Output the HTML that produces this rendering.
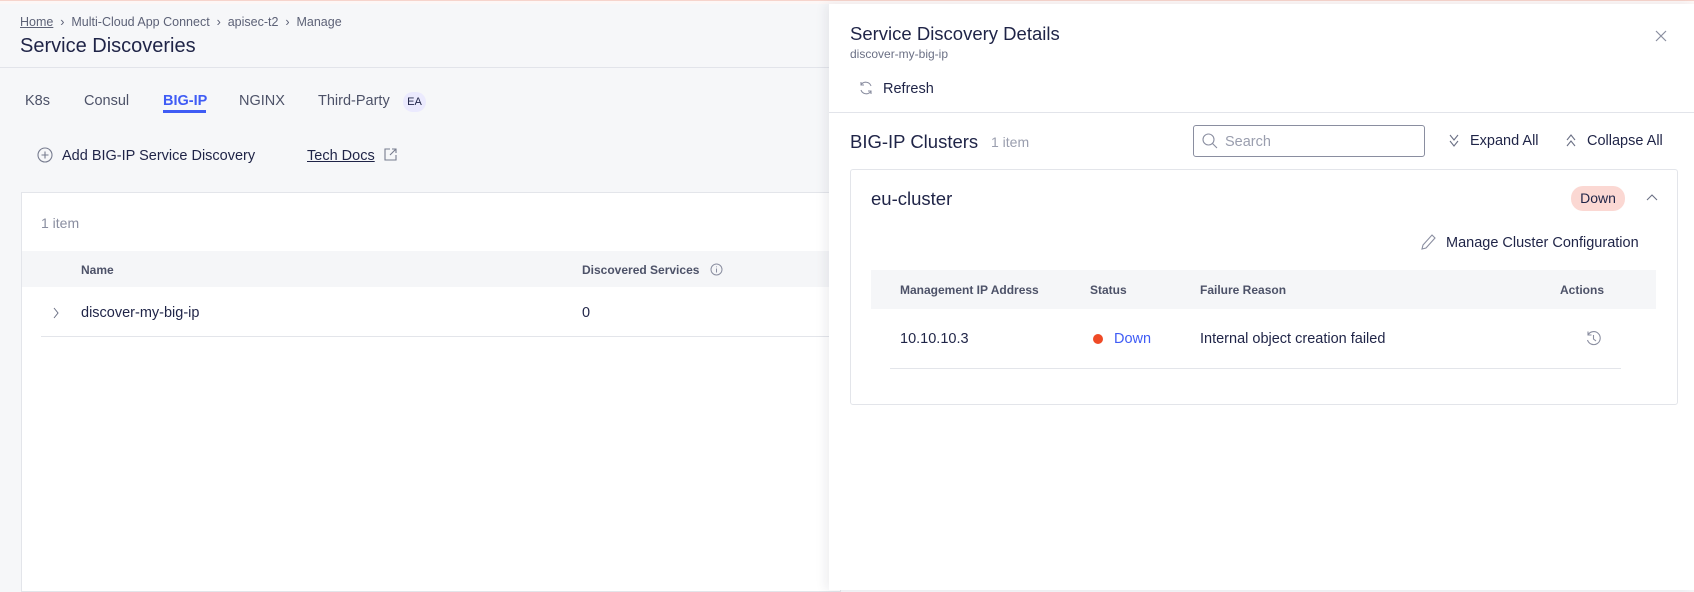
<!DOCTYPE html>
<html><head><meta charset="utf-8"><style>
*{box-sizing:border-box;margin:0;padding:0}
body{width:1694px;height:590px;overflow:hidden;background:#f6f7f9;font-family:"Liberation Sans",sans-serif;color:#1f2447;position:relative;font-size:14px}
.a{position:absolute;white-space:nowrap}
.muted{color:#6b7085}
</style></head><body>
<div class="a" style="left:0;top:0;width:1694px;height:4px;border-top:1px solid #f6d4cc;background:#fdf7f6"></div>
<!-- left -->
<div class="a muted" style="left:20px;top:15px;font-size:12.5px;color:#5d6277"><span style="text-decoration:underline">Home</span> &nbsp;›&nbsp; Multi-Cloud App Connect &nbsp;›&nbsp; apisec-t2 &nbsp;›&nbsp; Manage</div>
<div class="a" style="left:20px;top:35px;font-size:20px;color:#1f2447">Service Discoveries</div>
<div class="a" style="left:0;top:67px;width:830px;height:1px;background:#e2e4ea"></div>
<div class="a" style="left:25px;top:93px;font-size:14.5px;color:#4d5268">K8s</div>
<div class="a" style="left:84px;top:93px;font-size:14.5px;color:#4d5268">Consul</div>
<div class="a" style="left:163px;top:93px;font-size:14.5px;color:#3f5cf5;font-weight:bold">BIG-IP</div>
<div class="a" style="left:163px;top:110px;width:43px;height:3px;background:#3f5cf5"></div>
<div class="a" style="left:239px;top:93px;font-size:14.5px;color:#4d5268">NGINX</div>
<div class="a" style="left:318px;top:93px;font-size:14.5px;color:#4d5268">Third-Party</div>
<div class="a" style="left:403px;top:92px;width:23px;height:20px;border-radius:10px;background:#ebeafe;font-size:11px;color:#1f2447;text-align:center;line-height:20px">EA</div>
<svg class="a" style="left:37px;top:147px" width="16" height="16" viewBox="0 0 16 16" fill="none" stroke="#777c8f" stroke-width="1.1"><circle cx="8" cy="8" r="7"/><path d="M8 4.5v7M4.5 8h7"/></svg>
<div class="a" style="left:62px;top:148px;font-size:14.5px">Add BIG-IP Service Discovery</div>
<div class="a" style="left:307px;top:148px;font-size:14.5px;text-decoration:underline">Tech Docs</div>
<svg class="a" style="left:384px;top:148px" width="13" height="13" viewBox="0 0 13 13" fill="none" stroke="#777c8f" stroke-width="1.1"><path d="M6 1H1v11h11V7M8 1h4v4M12 1L6 7"/></svg>
<div class="a" style="left:21px;top:192px;width:820px;height:400px;background:#fff;border:1px solid #e3e5ea"></div>
<div class="a muted" style="left:41px;top:215px;font-size:14px;color:#8a8ea0">1 item</div>
<div class="a" style="left:22px;top:251px;width:810px;height:36px;background:#f5f6f8"></div>
<div class="a" style="left:81px;top:263px;font-size:12px;font-weight:bold;color:#4d5268">Name</div>
<div class="a" style="left:582px;top:263px;font-size:12px;font-weight:bold;color:#4d5268">Discovered Services</div>
<svg class="a" style="left:710px;top:263px" width="13" height="13" viewBox="0 0 13 13" fill="none" stroke="#8a8ea0"><circle cx="6.5" cy="6.5" r="5.5"/><path d="M6.5 5.5v4M6.5 3.5v.8"/></svg>
<svg class="a" style="left:52px;top:306px" width="8" height="14" viewBox="0 0 8 14" fill="none" stroke="#6b7085"><path d="M2 2l4 5-4 5"/></svg>
<div class="a" style="left:81px;top:305px;font-size:14.5px">discover-my-big-ip</div>
<div class="a" style="left:582px;top:305px;font-size:14.5px">0</div>
<div class="a" style="left:41px;top:336px;width:790px;height:1px;background:#e3e5ea"></div>
<!-- drawer -->
<div class="a" style="left:829px;top:4px;width:865px;height:586px;background:#fff;box-shadow:-4px 0 10px rgba(30,35,60,0.07)"></div>
<div class="a" style="left:850px;top:23px;font-size:18.5px">Service Discovery Details</div>
<div class="a" style="left:850px;top:47px;font-size:12px;color:#6b7085">discover-my-big-ip</div>
<svg class="a" style="left:1655px;top:30px" width="12" height="12" viewBox="0 0 12 12" stroke="#8a8ea0" stroke-width="1.2"><path d="M1 1l10 10M11 1L1 11"/></svg>
<svg class="a" style="left:858px;top:80px" width="16" height="16" viewBox="0 0 16 16" fill="none" stroke="#8a8ea0" stroke-width="1.1"><path d="M13 6A5.5 5.5 0 0 0 3 5M3 2v3h3M3 10a5.5 5.5 0 0 0 10 1M13 14v-3h-3"/></svg>
<div class="a" style="left:883px;top:81px;font-size:14.5px">Refresh</div>
<div class="a" style="left:829px;top:112px;width:865px;height:1px;background:#e2e4ea"></div>
<div class="a" style="left:850px;top:131px;font-size:18.5px">BIG-IP Clusters</div>
<div class="a" style="left:991px;top:134px;font-size:14px;color:#9a9eae">1 item</div>
<div class="a" style="left:1193px;top:125px;width:232px;height:32px;border:1px solid #8a8ea0;border-radius:3px"></div>
<svg class="a" style="left:1202px;top:133px" width="16" height="16" viewBox="0 0 16 16" fill="none" stroke="#8a8ea0" stroke-width="1.1"><circle cx="6.5" cy="6.5" r="5.5"/><path d="M10.5 10.5l4.5 4.5"/></svg>
<div class="a" style="left:1225px;top:134px;font-size:14.5px;color:#9a9eae">Search</div>
<svg class="a" style="left:1448px;top:133px" width="12" height="16" viewBox="0 0 12 16" fill="none" stroke="#6b7085" stroke-width="1.1"><path d="M2 2l4 5 4-5M2 8l4 5 4-5"/></svg>
<div class="a" style="left:1470px;top:133px;font-size:14.5px">Expand All</div>
<svg class="a" style="left:1565px;top:133px" width="12" height="16" viewBox="0 0 12 16" fill="none" stroke="#6b7085" stroke-width="1.1"><path d="M2 7l4-5 4 5M2 13l4-5 4 5"/></svg>
<div class="a" style="left:1587px;top:133px;font-size:14.5px">Collapse All</div>
<div class="a" style="left:850px;top:169px;width:828px;height:236px;border:1px solid #e3e5ea;border-radius:3px"></div>
<div class="a" style="left:871px;top:188px;font-size:18.5px">eu-cluster</div>
<div class="a" style="left:1571px;top:186px;width:54px;height:25px;border-radius:12px;background:#fbd8d3;text-align:center;line-height:25px;font-size:14px">Down</div>
<svg class="a" style="left:1645px;top:192px" width="14" height="10" viewBox="0 0 14 10" fill="none" stroke="#6b7085" stroke-width="1.1"><path d="M2 8l5-5 5 5"/></svg>
<svg class="a" style="left:1421px;top:233px" width="16" height="18" viewBox="0 0 16 18" fill="none" stroke="#8a8ea0" stroke-width="1.1"><path d="M11 2l3 3-9 10-4 1 1-4z"/></svg>
<div class="a" style="left:1446px;top:235px;font-size:14.5px">Manage Cluster Configuration</div>
<div class="a" style="left:871px;top:270px;width:785px;height:39px;background:#f5f6f8"></div>
<div class="a" style="left:900px;top:283px;font-size:12px;font-weight:bold;color:#4d5268">Management IP Address</div>
<div class="a" style="left:1090px;top:283px;font-size:12px;font-weight:bold;color:#4d5268">Status</div>
<div class="a" style="left:1200px;top:283px;font-size:12px;font-weight:bold;color:#4d5268">Failure Reason</div>
<div class="a" style="left:1560px;top:283px;font-size:12px;font-weight:bold;color:#4d5268">Actions</div>
<div class="a" style="left:900px;top:331px;font-size:14.5px">10.10.10.3</div>
<div class="a" style="left:1093px;top:334px;width:10px;height:10px;border-radius:50%;background:#ef4a26"></div>
<div class="a" style="left:1114px;top:331px;font-size:14.5px;color:#3f5cf5">Down</div>
<div class="a" style="left:1200px;top:331px;font-size:14.5px">Internal object creation failed</div>
<svg class="a" style="left:1585px;top:330px" width="17" height="17" viewBox="0 0 17 17" fill="none" stroke="#8a8ea0" stroke-width="1.1"><path d="M3 5A6.5 6.5 0 1 1 2.5 10M3 1.5V5h3.5M8.5 5v4l2.5 2"/></svg>
<div class="a" style="left:890px;top:368px;width:731px;height:1px;background:#e3e5ea"></div>
</body></html>
